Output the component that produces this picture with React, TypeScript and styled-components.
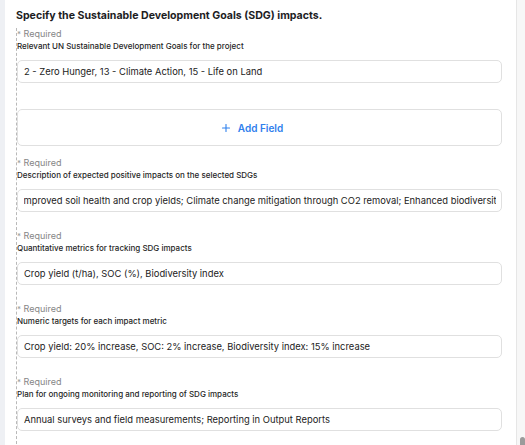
import styled, { createGlobalStyle } from "styled-components"
import { Plus } from "lucide-react"

const GlobalStyle = createGlobalStyle`
    html, body {
        margin: 0;
        padding: 0;
        background: #ffffff;
        font-family: Inter, "Noto Sans", "Liberation Sans", sans-serif;
    }
`

const Page = styled.div`
    display: flex;
    width: 525px;
    height: 445px;
    overflow: hidden;
`

const SideStrip = styled.div`
    width: 5px;
    flex-shrink: 0;
    background: #eef0f4;
`

const Panel = styled.div`
    flex: 1;
    min-width: 0;
    padding: 8px 14px 0 11px;
    background: #ffffff;
`

const Gutter = styled.div`
    width: 8px;
    flex-shrink: 0;
    border-left: 1px solid #e6e6e6;
    background: #f7f7f7;
    display: flex;
    flex-direction: column;
    justify-content: flex-end;
    align-items: flex-end;
`

const Thumb = styled.div`
    width: 5px;
    height: 8px;
    border-radius: 3px 3px 0 0;
    background: #9b9b9b;
`

const Title = styled.h2`
    margin: 0 0 4px;
    font-size: 10.6px;
    line-height: 16px;
    font-weight: 700;
    color: #1d1d1f;
`

const Fields = styled.div`
    border-left: 1px dashed #b9b9b9;
    display: flex;
    flex-direction: column;
    min-width: 0;
`

const Group = styled.div<{ $tight?: boolean }>`
    display: flex;
    flex-direction: column;
    min-width: 0;
    margin-bottom: ${p => (p.$tight ? 0 : 18)}px;
`

const Required = styled.div`
    font-size: 9px;
    line-height: 12px;
    color: #858585;

    span {
        font-size: 8px;
        color: #9a9a9a;
    }
`

const Label = styled.div`
    font-size: 8px;
    line-height: 12px;
    font-weight: 500;
    color: #1f1f1f;
    margin-bottom: 8px;
`

const Field = styled.div`
    height: 23px;
    box-sizing: border-box;
    border: 1px solid #e0e0e0;
    border-radius: 5px;
    padding: 0 5px 0 6px;
    display: flex;
    align-items: center;
    min-width: 0;
`

const FieldText = styled.span<{ $shift?: number }>`
    flex: 1;
    min-width: 0;
    overflow: hidden;
    white-space: nowrap;
    font-size: 9.4px;
    color: #222222;
    text-indent: ${p => (p.$shift ? -p.$shift : 0)}px;
`

const AddFieldBox = styled.button`
    margin: 26px 0 11px;
    padding: 0 16px 0 0;
    height: 37px;
    box-sizing: border-box;
    border: 1px solid #e0e0e0;
    border-radius: 5px;
    background: #ffffff;
    display: flex;
    align-items: center;
    justify-content: center;
    gap: 6px;
    font-family: inherit;
    font-size: 10px;
    font-weight: 600;
    color: #2f80ed;
    cursor: pointer;

    svg {
        color: #2f80ed;
    }
`

const groups = [
    {
        label: "Relevant UN Sustainable Development Goals for the project",
        value: "2 - Zero Hunger, 13 - Climate Action, 15 - Life on Land",
        addField: true,
    },
    {
        label: "Description of expected positive impacts on the selected SDGs",
        value: "Improved soil health and crop yields; Climate change mitigation through CO2 removal; Enhanced biodiversity",
        shift: 3,
    },
    {
        label: "Quantitative metrics for tracking SDG impacts",
        value: "Crop yield (t/ha), SOC (%), Biodiversity index",
    },
    {
        label: "Numeric targets for each impact metric",
        value: "Crop yield: 20% increase, SOC: 2% increase, Biodiversity index: 15% increase",
    },
    {
        label: "Plan for ongoing monitoring and reporting of SDG impacts",
        value: "Annual surveys and field measurements; Reporting in Output Reports",
    },
]

const App: React.FC = () => {
    return (
        <Page>
            <GlobalStyle />
            <SideStrip />
            <Panel>
                <Title>Specify the Sustainable Development Goals (SDG) impacts.</Title>
                <Fields>
                    {groups.map(g => (
                        <Group key={g.label} $tight={g.addField}>
                            <Required><span>*</span> Required</Required>
                            <Label>{g.label}</Label>
                            <Field>
                                <FieldText $shift={g.shift}>{g.value}</FieldText>
                            </Field>
                            {g.addField && (
                                <AddFieldBox type="button">
                                    <Plus size={12} strokeWidth={2.2} />
                                    Add Field
                                </AddFieldBox>
                            )}
                        </Group>
                    ))}
                </Fields>
            </Panel>
            <Gutter>
                <Thumb />
            </Gutter>
        </Page>
    )
}

export default App
